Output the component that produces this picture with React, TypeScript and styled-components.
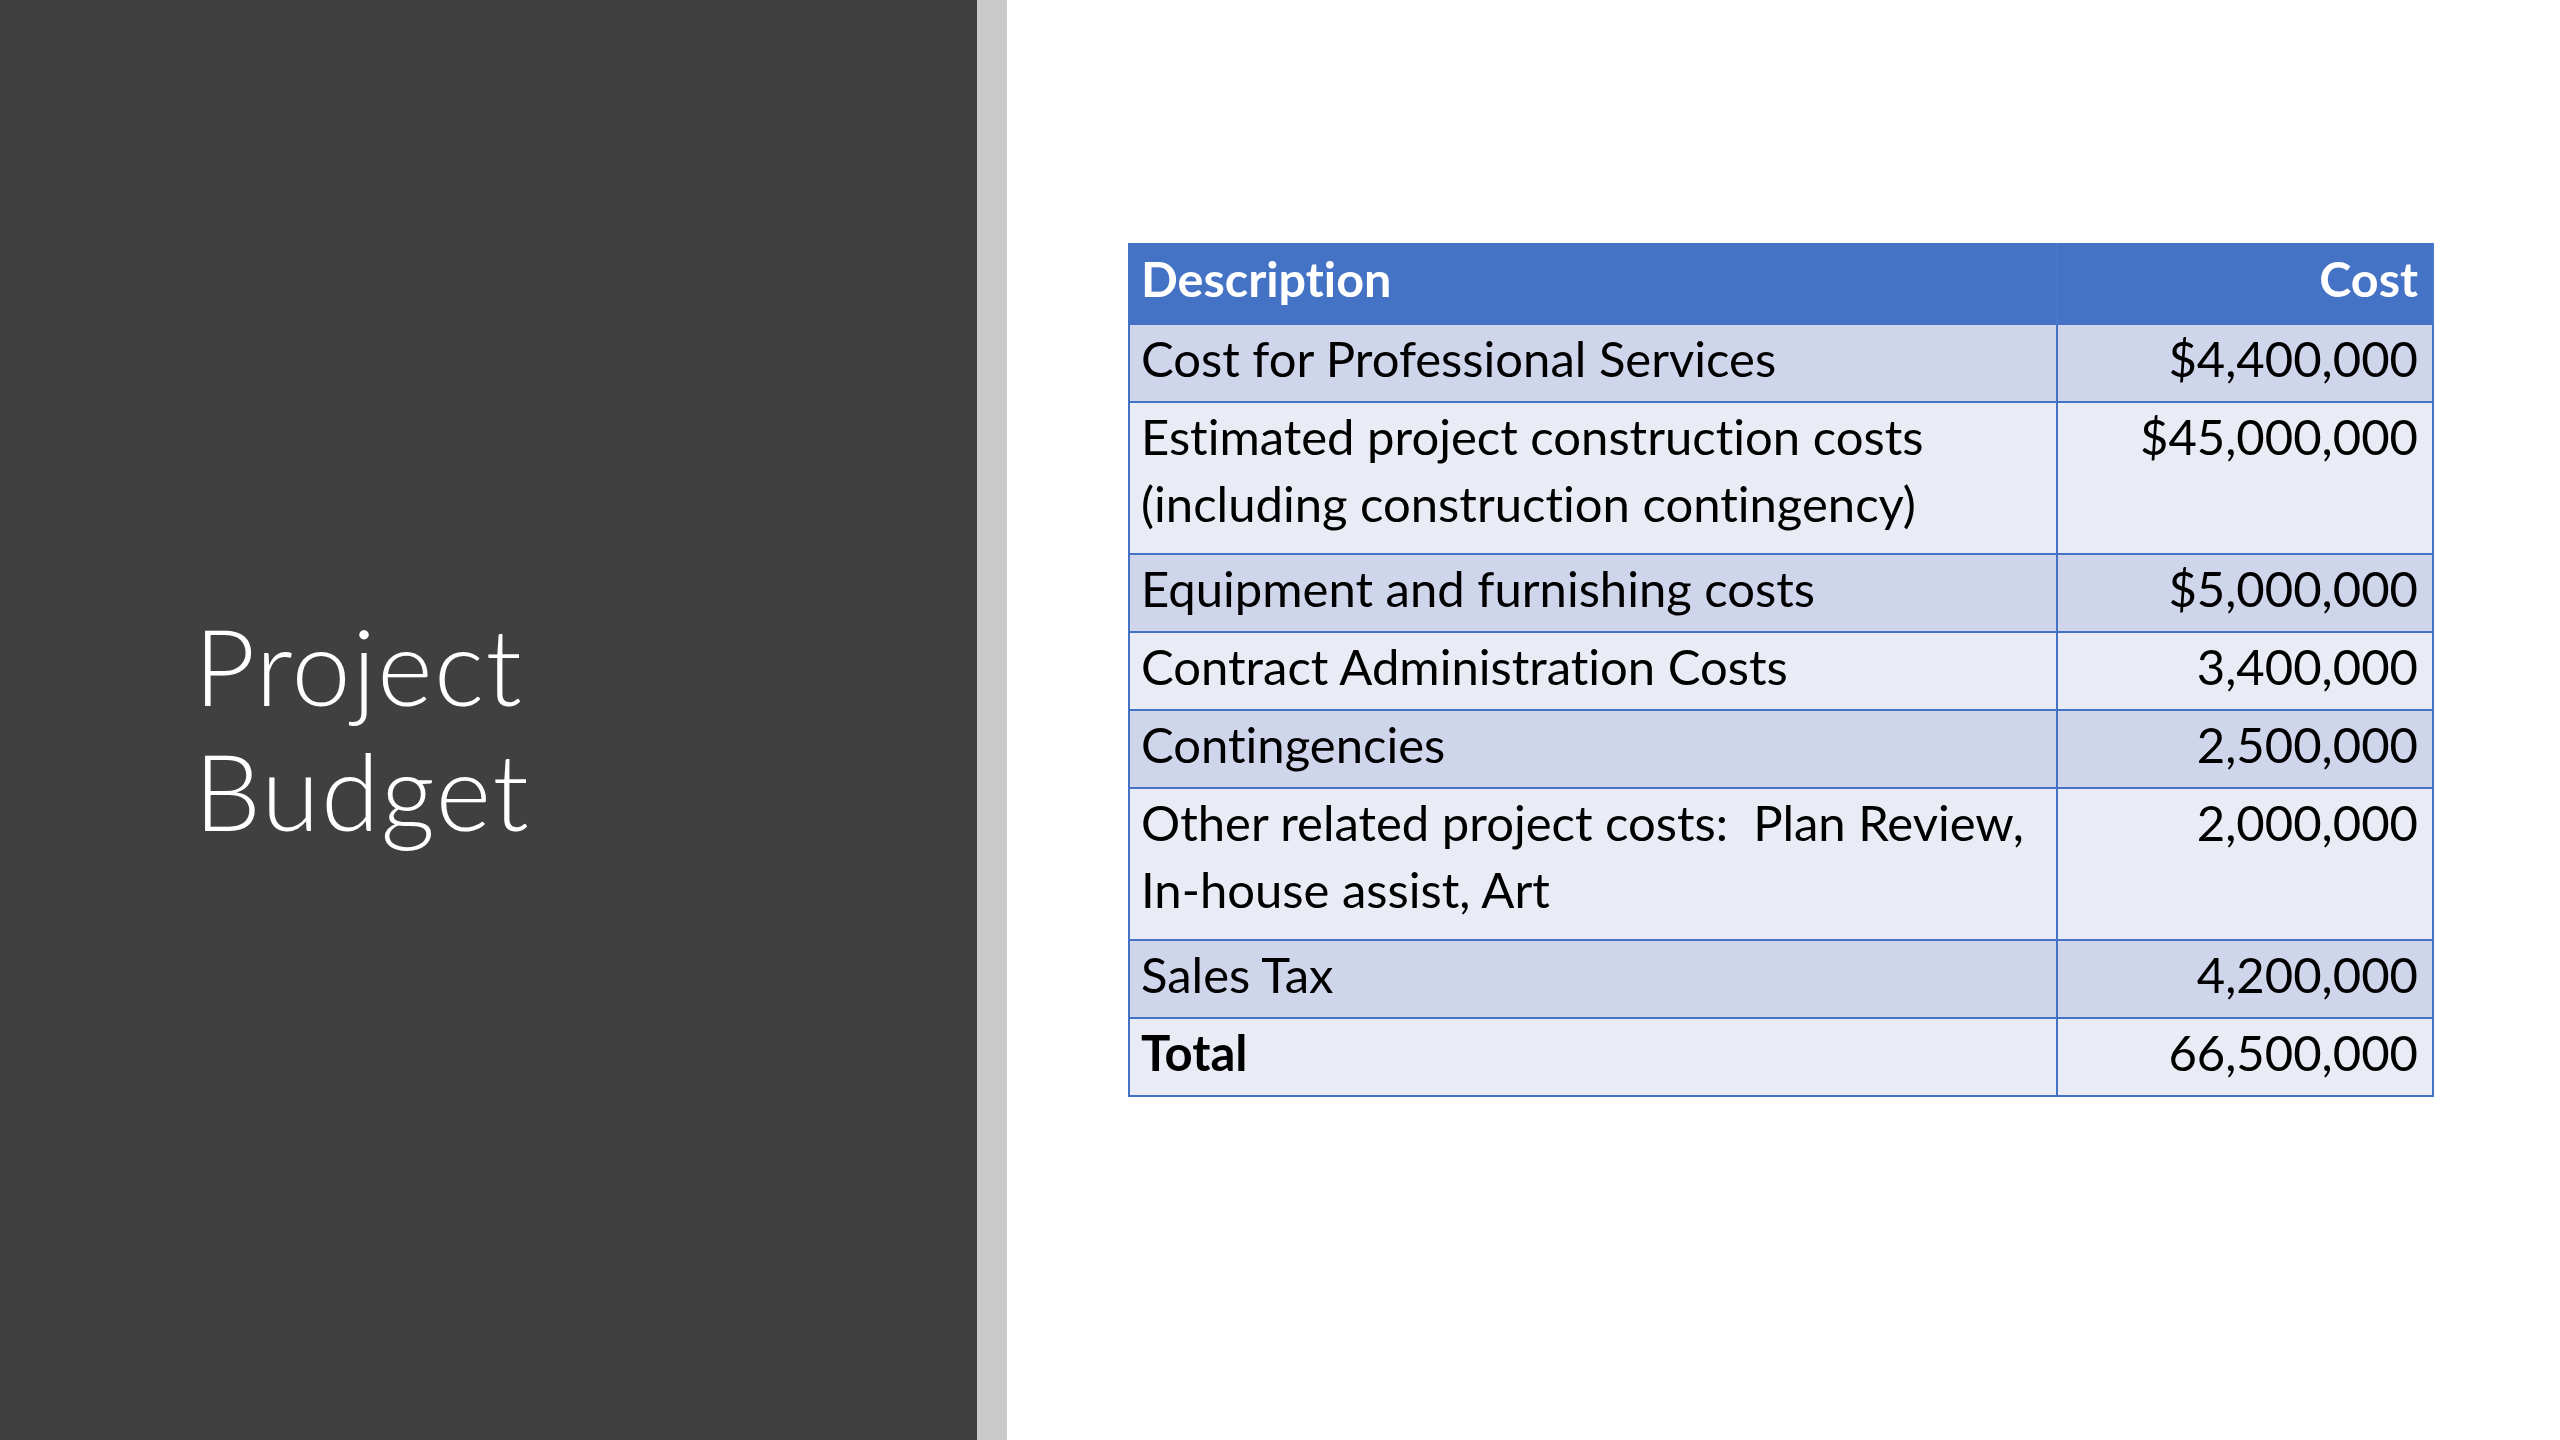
import styled, { createGlobalStyle } from 'styled-components'

const GlobalStyle = createGlobalStyle`
  html, body {
    margin: 0;
    padding: 0;
    background: #ffffff;
  }
  #root {
    width: 2560px;
    height: 1440px;
  }
`

const Slide = styled.div`
  display: flex;
  width: 2560px;
  height: 1440px;
  overflow: hidden;
  font-family: Lato, 'Open Sans', sans-serif;
  font-variant-ligatures: none;
`

const Sidebar = styled.aside`
  width: 977px;
  flex-shrink: 0;
  background: #404040;
  padding: 603px 0 0 194px;
  box-sizing: border-box;
`

const Title = styled.h1`
  margin: 0;
  color: #ffffff;
  font-weight: 300;
  font-size: 106px;
  letter-spacing: 1.5px;
  line-height: 125px;
`

const Divider = styled.div`
  width: 30px;
  flex-shrink: 0;
  background: #c9c9c9;
`

const Content = styled.main`
  flex: 1;
  padding: 243px 0 0 121px;
`

const Table = styled.table`
  width: 1304px;
  border-collapse: collapse;
  table-layout: fixed;
  border: 2px solid #4472c4;
`

const HeadCell = styled.th<{ $align?: 'left' | 'right' }>`
  height: 80px;
  padding: 0 14px 0 11px;
  box-sizing: border-box;
  vertical-align: top;
  background: #4472c4;
  color: #ffffff;
  font-size: 48.5px;
  font-weight: 700;
  line-height: 67px;
  text-align: ${(p) => p.$align ?? 'left'};
  border-right: 2px solid #4a78c8;
`

const Row = styled.tr<{ $band: boolean; $tall?: boolean }>`
  background: ${(p) => (p.$band ? '#cfd5ea' : '#e9ebf5')};
  height: ${(p) => (p.$tall ? '152px' : '78px')};
`

const Cell = styled.td<{ $align?: 'left' | 'right'; $bold?: boolean }>`
  padding: 0 14px 0 11px;
  box-sizing: border-box;
  vertical-align: top;
  color: #000000;
  font-size: 49px;
  font-weight: ${(p) => (p.$bold ? 700 : 400)};
  line-height: 67px;
  white-space: pre;
  text-align: ${(p) => p.$align ?? 'left'};
  border: 2px solid #4472c4;
`

const rows: { desc: string[]; cost: string; bold?: boolean }[] = [
  { desc: ['Cost for Professional Services'], cost: '$4,400,000' },
  { desc: ['Estimated project construction costs', '(including construction contingency)'], cost: '$45,000,000' },
  { desc: ['Equipment and furnishing costs'], cost: '$5,000,000' },
  { desc: ['Contract Administration Costs'], cost: '3,400,000' },
  { desc: ['Contingencies'], cost: '2,500,000' },
  { desc: ['Other related project costs:  Plan Review,', 'In-house assist, Art'], cost: '2,000,000' },
  { desc: ['Sales Tax'], cost: '4,200,000' },
  { desc: ['Total'], cost: '66,500,000', bold: true },
]

export default function App() {
  return (
    <>
      <GlobalStyle />
      <Slide>
        <Sidebar>
          <Title>
            Project
            <br />
            Budget
          </Title>
        </Sidebar>
        <Divider />
        <Content>
          <Table>
            <colgroup>
              <col style={{ width: 928 }} />
              <col style={{ width: 376 }} />
            </colgroup>
            <thead>
              <tr>
                <HeadCell>Description</HeadCell>
                <HeadCell $align="right">Cost</HeadCell>
              </tr>
            </thead>
            <tbody>
              {rows.map((r, i) => (
                <Row key={r.cost} $band={i % 2 === 0} $tall={r.desc.length > 1}>
                  <Cell $bold={r.bold}>{r.desc.join('\n')}</Cell>
                  <Cell $align="right">{r.cost}</Cell>
                </Row>
              ))}
            </tbody>
          </Table>
        </Content>
      </Slide>
    </>
  )
}
